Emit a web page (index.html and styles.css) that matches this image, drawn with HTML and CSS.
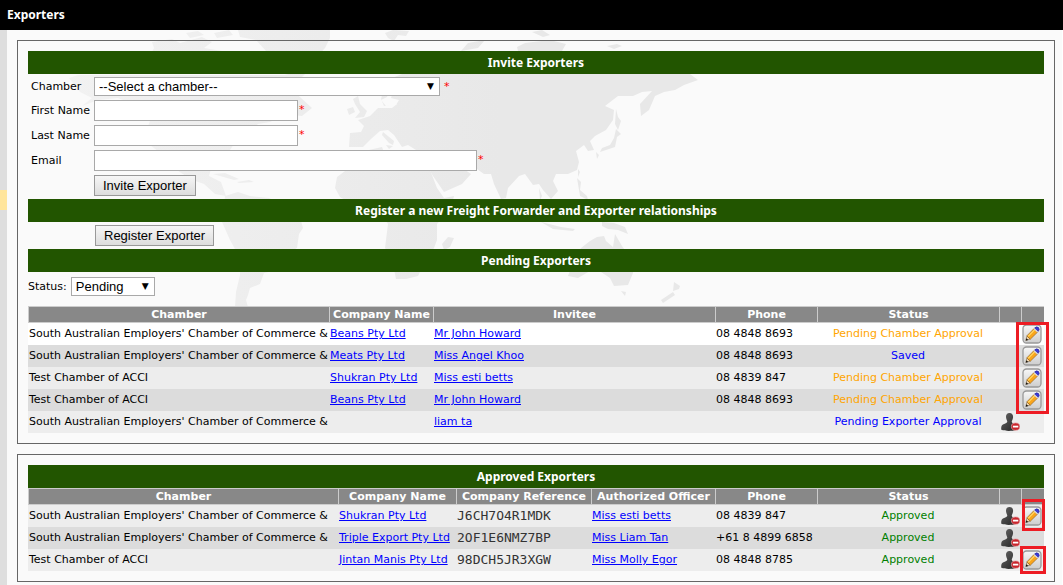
FILE: index.html
```html
<!DOCTYPE html>
<html lang="en">
<head>
<meta charset="utf-8">
<title>Exporters</title>
<link rel="stylesheet" href="styles.css">
</head>
<body>
<svg class="defs" aria-hidden="true">
  <defs>
    <linearGradient id="land" gradientUnits="userSpaceOnUse" x1="60" y1="0" x2="500" y2="0"><stop offset="0" stop-color="#f2f2f2"/><stop offset="1" stop-color="#e8e8e8"/></linearGradient>
    <linearGradient id="btn" x1="0" y1="0" x2="0" y2="1"><stop offset="0" stop-color="#f8f8f8"/><stop offset="1" stop-color="#cdcdcd"/></linearGradient>
    <linearGradient id="man" x1="0" y1="0" x2="1" y2="1"><stop offset="0" stop-color="#666"/><stop offset="1" stop-color="#222"/></linearGradient>
    <symbol id="pencil" viewBox="0 0 20 20">
      <rect x="1" y="1" width="18" height="18" rx="3.5" fill="url(#btn)" stroke="#999" stroke-width="1.3"/>
      <path d="M3.8 16.6 5 12 8.2 15Z" fill="#f4d9ae" stroke="#6b5639" stroke-width=".6"/>
      <path d="M3.8 16.6 4.4 14.2 6.2 15.9Z" fill="#111"/>
      <path d="M4.8 11.9 12 4.5 15.7 8 8.3 15.2Z" fill="#f9a51c" stroke="#8a5a20" stroke-width=".6"/>
      <path d="M6.2 12.3 12.8 5.7" stroke="#ffdb69" stroke-width="1.2"/>
      <path d="M11.7 4.9 12.9 3.7 16.4 7.1 15.2 8.4Z" fill="#d8d8e8"/>
      <path d="M12.7 3.9Q14.6 2 16.6 3.6 18 5.6 16.3 7.3Z" fill="#3838dd" stroke="#22228b" stroke-width=".6"/>
    </symbol>
    <symbol id="person" viewBox="0 0 20 20">
      <path d="M9.5 1C7 1 5.9 2.8 6 5 6.1 7 7 8 7.3 9.4 7 11.4 3.5 11.5 2 13.2 1.1 14.4 1.1 16.5 1.3 17.7 5.5 19.3 12 19.3 16.5 17.7 16.9 15.6 16.5 13.6 15 12.7 13.6 11.6 11.8 11.2 11.7 9.4 12.2 8 13 7 13.1 5 13.2 2.8 12 1 9.5 1Z" fill="url(#man)"/>
      <ellipse cx="15.6" cy="14.6" rx="4.2" ry="3.7" fill="#c9252c" stroke="#e8a1a3" stroke-width=".7"/>
      <rect x="12.9" y="13.7" width="5.4" height="1.8" fill="#fff"/>
    </symbol>
  </defs>
</svg>
<header class="topbar"><h1>Exporters</h1></header>
<div class="layout">
  <aside class="rail"><div class="rail-mark"></div></aside>
  <main class="content">
    <svg class="map" width="1063" height="585" viewBox="0 0 1063 585" aria-hidden="true">
      <g fill="url(#land)">
      <path d="M235 20H330V38L325 48 316 58H285L266 51 256 40 240 37Z"/>
      <path d="M152 42l20-3 8 4 22-6 10 5-8 6 18 3-14 5H150l4-8Zm34-9 12-2 6 4-14 3Zm28 0 15-3 4 5-16 3Z"/>
      <path d="M69 78 78 75H300L304 80 290 88 300 97 312 108 302 116 285 114 270 122 258 124 250 130 238 138 230 150 218 153 205 155 198 151 190 157 192 169 201 171 206 164 212 165 209 176 221 182 226 196 215 194 204 184 190 179 177 170 163 155 150 145 147 129 151 118 143 109 132 104 118 98 98 100 82 106 92 98 80 92Z"/>
      <path d="M213 174l12-1 14 6-5 1-14-4Zm24 8 12-2 5 2-15 1Z"/>
      <path d="M225 196 238 192 250 196 269 198 286 207 301 221 303 228 299 234 297 248 280 257 273 271 264 273 260 284 250 288 248 295 246 300 248 307H235L236 292 240 275 240 258 230 240 222 222Z"/>
      <path d="M281 76 292 73 305 74 300 79 286 80Z"/>
      <path d="M385 33l8-3 16 1-3 5-8-1-4 6-6-3ZM355 104l-2-5 5-3 2 8 7 7-3 6-9 1 5-6Zm-8 5 6-2 2 5-6 3Z"/>
      <path d="M461 51 468 43 485 40 478 48ZM517 47 525 43 550 40 566 44 562 51H518ZM532 32l10-2 8 5-7 2ZM607 46l10-2 5 2-8 3Z"/>
      <path d="M349 147 350 133 361 132 364 126 358 120 370 116 378 108 392 108 397 104 384 106 381 99 384 88 392 78 402 74H690L698 80 684 85 675 90 664 92 655 96 649 110 641 116 640 104 652 91 642 92 633 96 618 96 605 106 614 110 613 120 606 130 595 136 590 141 594 150 588 151 584 145 576 151 579 162 577 170 568 174 556 174 553 181 558 191 551 199 543 190 539 184 533 185 525 174 519 176 508 188 506 198 501 199 494 184 491 174 484 174 477 169 461 167 471 174 462 184 444 192 433 176 426 164 436 150 416 150 408 145 402 147 394 135 388 130 380 131 371 139 363 147Z"/>
      <path d="M383 132l11 9-1 4-4-2-7-8Zm3 13 7 1-4 3Z"/>
      <path d="M345 171 350 158 360 152 382 147 385 155 400 160 427 162 437 188 444 198 454 196 451 208 437 224 437 240 434 248 425 262 418 276 406 279 396 279 392 259 385 248 388 224 376 207 365 201 350 203 340 197 335 188 337 177Z"/>
      <path d="M442 244l6-7 6 1-4 9-6 3ZM616 109l2 8 3 4-3 9-3-6ZM616 129l5 5-4 3-2 10-15 5 2-4 8-3 4-7ZM596 152l3 3-2 4ZM578 169l2 3-2 5ZM577 178l4 4-1 8 7 6 1 4-8-4ZM539 188l3 8-2 4ZM541 222l20 5 14 2-2 2-20-2ZM602 222l12 1 11 4 3 7-10-4-10-1-6-3Z"/>
      <path d="M568 276 572 265 581 248 590 241 597 237 604 236 606 241 613 247 615 234 622 246 634 263 633 273 628 285 614 286 610 278 601 272 590 271 578 278ZM621 291l5 1-1 4ZM674 282l6 4-1 3-6 2ZM673 292l2 3-12 8-2-3Z"/>
      </g>
      <path class="sea" d="M381 100l6-3 4-10 3 1-3 10 8 2-3 5-10 1Z"/>
    </svg>
    <section class="panel">
      <h2 class="bar">Invite Exporters</h2>
      <form class="invite">
        <label for="chamber">Chamber</label>
        <div class="field"><span class="pick pick-wide"><select id="chamber"><option>--Select a chamber--</option></select></span><span class="req spaced">*</span></div>
        <label for="first">First Name</label>
        <div class="field"><input id="first" class="text" type="text"><span class="req">*</span></div>
        <label for="last">Last Name</label>
        <div class="field"><input id="last" class="text" type="text"><span class="req">*</span></div>
        <label for="email">Email</label>
        <div class="field"><input id="email" class="text text-wide" type="text"><span class="req">*</span></div>
        <div class="field send"><button class="btn" type="button">Invite Exporter</button></div>
      </form>
      <h2 class="bar">Register a new Freight Forwarder and Exporter relationships</h2>
      <div class="register"><button class="btn" type="button">Register Exporter</button></div>
      <h2 class="bar">Pending Exporters</h2>
      <div class="filter"><label for="status">Status:</label><span class="pick"><select id="status"><option>Pending</option></select></span></div>
      <div class="grid-wrap">
        <table class="grid pending">
          <colgroup><col><col class="c-name"><col class="c-invitee"><col class="c-phone"><col class="c-status"><col class="c-icon"><col class="c-edit"></colgroup>
          <thead><tr><th>Chamber</th><th>Company Name</th><th>Invitee</th><th>Phone</th><th>Status</th><th></th><th></th></tr></thead>
          <tbody>
            <tr class="new"><td>South Australian Employers' Chamber of Commerce &amp;</td><td><a href="#">Beans Pty Ltd</a></td><td><a href="#">Mr John Howard</a></td><td>08 4848 8693</td><td class="wait">Pending Chamber Approval</td><td></td><td><button class="icon" aria-label="Edit"><svg><use href="#pencil"/></svg></button></td></tr>
            <tr><td>South Australian Employers' Chamber of Commerce &amp;</td><td><a href="#">Meats Pty Ltd</a></td><td><a href="#">Miss Angel Khoo</a></td><td>08 4848 8693</td><td class="saved">Saved</td><td></td><td><button class="icon" aria-label="Edit"><svg><use href="#pencil"/></svg></button></td></tr>
            <tr><td>Test Chamber of ACCI</td><td><a href="#">Shukran Pty Ltd</a></td><td><a href="#">Miss esti betts</a></td><td>08 4839 847</td><td class="wait">Pending Chamber Approval</td><td></td><td><button class="icon" aria-label="Edit"><svg><use href="#pencil"/></svg></button></td></tr>
            <tr><td>Test Chamber of ACCI</td><td><a href="#">Beans Pty Ltd</a></td><td><a href="#">Mr John Howard</a></td><td>08 4848 8693</td><td class="wait">Pending Chamber Approval</td><td></td><td><button class="icon" aria-label="Edit"><svg><use href="#pencil"/></svg></button></td></tr>
            <tr><td>South Australian Employers' Chamber of Commerce &amp;</td><td></td><td><a href="#">liam ta</a></td><td></td><td class="saved">Pending Exporter Approval</td><td><button class="icon" aria-label="Remove"><svg><use href="#person"/></svg></button></td><td></td></tr>
          </tbody>
        </table>
        <div class="mark mark-all"></div>
      </div>
    </section>
    <section class="panel">
      <h2 class="bar">Approved Exporters</h2>
      <div class="grid-wrap">
        <table class="grid approved">
          <colgroup><col><col class="c-company"><col class="c-ref"><col class="c-officer"><col class="c-phone"><col class="c-status"><col class="c-icon"><col class="c-edit"></colgroup>
          <thead><tr><th>Chamber</th><th>Company Name</th><th>Company Reference</th><th>Authorized Officer</th><th>Phone</th><th>Status</th><th></th><th></th></tr></thead>
          <tbody>
            <tr><td>South Australian Employers' Chamber of Commerce &amp;</td><td><a href="#">Shukran Pty Ltd</a></td><td class="code">J6CH7O4R1MDK</td><td><a href="#">Miss esti betts</a></td><td>08 4839 847</td><td class="ok">Approved</td><td><button class="icon" aria-label="Remove"><svg><use href="#person"/></svg></button></td><td><button class="icon" aria-label="Edit"><svg><use href="#pencil"/></svg></button></td></tr>
            <tr><td>South Australian Employers' Chamber of Commerce &amp;</td><td><a href="#">Triple Export Pty Ltd</a></td><td class="code">2OF1E6NMZ7BP</td><td><a href="#">Miss Liam Tan</a></td><td>+61 8 4899 6858</td><td class="ok">Approved</td><td><button class="icon" aria-label="Remove"><svg><use href="#person"/></svg></button></td><td></td></tr>
            <tr><td>Test Chamber of ACCI</td><td><a href="#">Jintan Manis Pty Ltd</a></td><td class="code">98DCH5JR3XGW</td><td><a href="#">Miss Molly Egor</a></td><td>08 4848 8785</td><td class="ok">Approved</td><td><button class="icon" aria-label="Remove"><svg><use href="#person"/></svg></button></td><td><button class="icon" aria-label="Edit"><svg><use href="#pencil"/></svg></button></td></tr>
          </tbody>
        </table>
        <div class="mark mark-first"></div>
        <div class="mark mark-last"></div>
      </div>
    </section>
  </main>
</div>
</body>
</html>
```

FILE: styles.css
```css
* { box-sizing: border-box; }
body {
  margin: 0;
  min-height: 100vh;
  display: flex;
  flex-direction: column;
  background: #fff;
  color: #000;
  font: 11px/16px "DejaVu Sans", Verdana, sans-serif;
}
.defs { position: absolute; width: 0; height: 0; }
.topbar { height: 30px; padding: 7px; background: #000; color: #fff; position: relative; z-index: 1; }
h1, h2 { margin: 0; font: bold 12px/16px "Noto Sans", Verdana, sans-serif; }
.layout { flex: 1; display: flex; padding-right: 1px; }
.rail { width: 7px; background: #dedede; padding-top: 160px; }
.rail-mark { height: 20px; background: #ffe59c; }
.content {
  flex: 1;
  min-width: 0;
  padding: 10px 7px 3px 10px;
  display: flex;
  flex-direction: column;
  gap: 10px;
  background: #fafafa;
}
.map { position: absolute; top: 0; left: 0; }
.sea { fill: #fafafa; }
.panel { position: relative; border: 1px solid #666; padding: 10px; }
.bar { height: 23px; padding: 4px; background: #225500; color: #fff; text-align: center; }

.invite { display: grid; grid-template-columns: 63px 1fr; gap: 4px 0; padding: 3px; align-items: center; }
.invite label { white-space: nowrap; }
.field { display: flex; }
.send { grid-column: 2; }
.req { color: #f00; padding-left: 1px; line-height: 19px; }
.spaced { padding-left: 4px; }
.text { width: 204px; height: 21px; border: 1px solid #a9a9a9; background: #fff; padding: 1px; }
.text-wide { width: 383px; }
.pick { position: relative; display: inline-block; width: 84px; height: 19px; }
.pick-wide { width: 346px; }
.pick::after { content: "▼"; position: absolute; right: 6px; top: 1px; font: 9px/16px "DejaVu Sans", sans-serif; pointer-events: none; }
select {
  appearance: none;
  display: block;
  width: 100%;
  height: 19px;
  padding: 0 4px;
  border: 1px solid #a9a9a9;
  border-radius: 0;
  background: #fff;
  color: #000;
  font: 13px/17px "Liberation Sans", Arial, sans-serif;
}
.btn {
  height: 21px;
  padding: 0 8px;
  border: 1px solid #999;
  background: linear-gradient(#f6f6f6, #dddddd);
  color: #000;
  font: 13px/18px "Liberation Sans", Arial, sans-serif;
}
.register { display: flex; padding: 3px 67px; }
.filter { display: flex; align-items: center; gap: 4px; padding: 5px 0 10px; }

.grid-wrap { position: relative; }
.grid { width: 100%; table-layout: fixed; border-collapse: separate; border-spacing: 0; }
.c-name { width: 104px; }
.c-invitee { width: 282px; }
.c-company { width: 118px; }
.c-ref { width: 135px; }
.c-officer { width: 124px; }
.c-phone { width: 102px; }
.c-status { width: 182px; }
.c-icon { width: 22px; }
.c-edit { width: 23px; }
th { height: 17px; padding: 0; border: solid #ccc; border-width: 1px 0 1px 1px; background: #888; color: #fff; line-height: 15px; white-space: nowrap; }
td { height: 22px; padding: 0 1px; white-space: nowrap; }
tbody tr { background: #ededed; }
tbody tr:nth-child(even) { background: #dcdcdc; }
tbody tr.new { background: #fff; }
a { color: #00f; text-decoration: underline; }
.wait, .saved, .ok { text-align: center; }
.wait { color: orange; }
.saved { color: #00f; }
.ok { color: green; }
.code { font: 13px/16px "DejaVu Sans Mono", monospace; color: #333; }
.icon { display: block; width: 20px; height: 20px; padding: 0; border: 0; background: none; }
.icon svg { display: block; width: 20px; height: 20px; }
.mark { position: absolute; border: 3px solid #ed1c24; pointer-events: none; }
.mark-all { top: 16px; right: -5px; width: 33px; height: 92px; }
.mark-first { top: 11px; right: -1px; width: 23px; height: 32px; }
.mark-last { top: 58px; right: -2px; width: 26px; height: 28px; }
```
